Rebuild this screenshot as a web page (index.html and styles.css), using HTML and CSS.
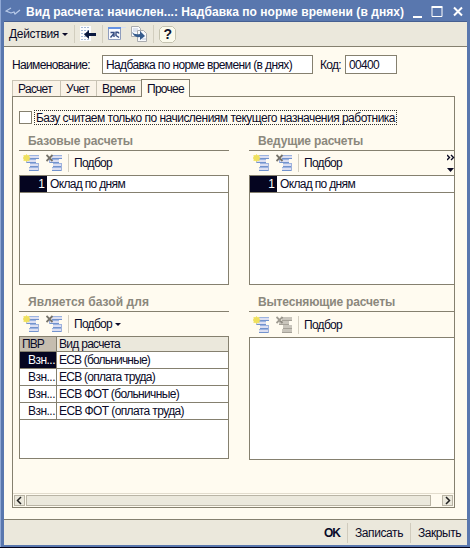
FILE: index.html
```html
<!DOCTYPE html>
<html lang="ru">
<head>
<meta charset="utf-8">
<title>Вид расчета</title>
<link rel="stylesheet" href="styles.css">
</head>
<body>
<svg class="defs" width="0" height="0">
  <defs>
    <g id="rows">
      <path d="M6 1h10v4H6zM3 5h10v4H3zM7 9h9v4H7zM6 13h10v4H6z" fill="#dcdff2"/>
      <path d="M6 1.500h10M3 5.500h10M7 9.500h9M6 13.500h10" stroke="#9db4e0"/>
      <path d="M6 4.500h10M3 8.500h10M7 12.500h9M6 16.500h10" stroke="#7393cd"/>
      <path d="M3.500 5v4M15.500 9v8" stroke="#a0b2dc"/>
    </g>
    <g id="rowsOff">
      <path d="M6 1h10v4H6zM3 5h10v4H3zM7 9h9v4H7zM6 13h10v4H6z" fill="#c9c5bc"/>
      <path d="M6 4.500h10M3 8.500h10M7 12.500h9M6 16.500h10" stroke="#a5a198"/>
    </g>
    <path id="star" d="M3.500 0l1 1.200 2-.2-.2 2L7.500 4 6.300 5l.2 2-2-.2-1 1.200-1-1.200-2 .2.2-2L-.5 4l1.200-1L.5 1l2 .2z" fill="#efe05c"/>
    <path id="cross" d="M.5 1l6 6M6.500 1l-6 6" stroke="#77736a" stroke-width="1.800"/>
  </defs>
</svg>
<div class="window">
  <header class="title">
    <svg class="logo" width="16" height="10"><path d="M6 1L1 4l5 2M6 6l3-1 1 2 5-4" fill="none" stroke="#b9cbe9" stroke-width="1.200"/></svg>
    <b data-w="378">Вид расчета: начислен...: Надбавка по норме времени (в днях)</b>
    <svg class="controls" width="52" height="14"><path d="M1 12h9" stroke="#fff" stroke-width="2"/><path d="M20 2.500h10v9H20z" fill="none" stroke="#fff"/><path d="M19.500 2h11" stroke="#fff" stroke-width="2"/><path d="M42 2.500l8 8M50 2.500l-8 8" stroke="#fff" stroke-width="2"/></svg>
  </header>
  <div class="toolbar">
    <span data-w="50">Действия</span><i class="caret"></i><i class="sep s1"></i>
    <svg class="t1" width="18" height="18"><path d="M0 1h11v15H0z" fill="#fcfdff"/><path d="M1 2.500h9M1 5.500h9M1 8.500h9M1 11.500h9M1 14.500h9" stroke="#a9bcd8" stroke-dasharray="2 1"/><path d="M4 9.500l5-4.500v3h7v3H9v3z" fill="#09183f"/></svg><i class="sep s2"></i>
    <svg class="t2" width="20" height="18"><path d="M1.500 3.500h12v11h-12z" fill="#f8f9ff" stroke="#8f9dbd"/><path d="M1 3h13" stroke="#6693e3" stroke-width="2"/><path d="M14 2.500h5" stroke="#d5e0f5"/><path d="M3.500 7.500h3.500v4.500M7 8.500L3.500 12.500M9 6.500v4l3 2M9 7.500q2-1 3 1" fill="none" stroke="#354c82" stroke-width="1.400"/></svg>
    <svg class="t3" width="18" height="18"><path d="M1.500 1.500h7l2 2v8h-9zM7.500 5.500h6l3 3v8h-9z" fill="#f8f9fc" stroke="#a9abae"/><path d="M3 4h5M3 6h4M12 14h4" stroke="#bec9df"/><path d="M2 7q2 3 8 2V6l5 5-5 4v-3Q4 13 2 7z" fill="#355b8d"/></svg><i class="sep s3"></i>
    <svg class="t4" width="17" height="17"><path d="M3.500.5h10l3 3v10l-3 3h-10l-3-3v-10z" fill="#fbfaec" stroke="#c5c3b0"/><text x="4.500" y="13" class="help">?</text></svg>
  </div>
  <main>
    <div class="fields">
      <label data-w="78">Наименование:</label>
      <div class="input name"><span data-w="186">Надбавка по норме времени (в днях)</span></div>
      <label class="code-label" data-w="21">Код:</label>
      <div class="input code"><span data-w="30">00400</span></div>
    </div>
    <nav class="tabs">
      <div class="tab a"><span data-w="34">Расчет</span></div><div class="tab b"><span data-w="23">Учет</span></div><div class="tab c"><span data-w="33">Время</span></div><div class="tab active"><span data-w="37">Прочее</span></div>
    </nav>
    <section class="panel">
      <div class="check"><i class="box"></i><div class="focus"><span data-w="359">Базу считаем только по начислениям текущего назначения работника</span></div></div>
      <div class="groups">
        <div class="group">
          <h2><span data-w="105">Базовые расчеты</span></h2>
          <div class="commands"><svg width="18" height="18"><use href="#rows"/><use href="#star"/></svg><svg width="18" height="18"><use href="#rows"/><use href="#cross"/></svg><i></i><span data-w="38">Подбор</span></div>
          <div class="table"><div class="row single"><div class="num">1</div><span data-w="75">Оклад по дням</span></div></div>
        </div>
        <div class="group right">
          <h2><span data-w="105">Ведущие расчеты</span></h2>
          <div class="commands"><svg width="18" height="18"><use href="#rows"/><use href="#star"/></svg><svg width="18" height="18"><use href="#rows"/><use href="#cross"/></svg><i></i><span data-w="38">Подбор</span>
            <svg class="more" width="8" height="20"><path d="M0 2l2.500 2.500L0 7M4 2l2.500 2.500L4 7" fill="none" stroke="#080822" stroke-width="1.400"/><path d="M0 15h7l-3.500 4z" fill="#080822"/></svg></div>
          <div class="table"><div class="row single"><div class="num">1</div><span data-w="75">Оклад по дням</span></div></div>
        </div>
        <div class="group base">
          <h2><span data-w="121">Является базой для</span></h2>
          <div class="commands"><svg width="18" height="18"><use href="#rows"/><use href="#star"/></svg><svg width="18" height="18"><use href="#rows"/><use href="#cross"/></svg><i></i><span data-w="38">Подбор</span><b class="caret"></b></div>
          <div class="table">
            <div class="row head"><div><span data-w="22">ПВР</span></div><span data-w="61">Вид расчета</span></div>
            <div class="row selected"><div><span data-w="27">Взн...</span></div><span data-w="91">ЕСВ (больничные)</span></div>
            <div class="row"><div><span data-w="27">Взн...</span></div><span data-w="96">ЕСВ (оплата труда)</span></div>
            <div class="row"><div><span data-w="27">Взн...</span></div><span data-w="120">ЕСВ ФОТ (больничные)</span></div>
            <div class="row"><div><span data-w="27">Взн...</span></div><span data-w="125">ЕСВ ФОТ (оплата труда)</span></div>
          </div>
        </div>
        <div class="group right displaced">
          <h2><span data-w="137">Вытесняющие расчеты</span></h2>
          <div class="commands"><svg width="18" height="18"><use href="#rows"/><use href="#star"/></svg><svg width="18" height="18"><use href="#rowsOff"/><use href="#cross" opacity=".7"/></svg><i></i><span data-w="38">Подбор</span></div>
          <div class="table"></div>
        </div>
      </div>
      <div class="scroll"><div class="btn"><svg width="9" height="9"><path d="M6 1L2.500 4.500 6 8" fill="none" stroke="#222" stroke-width="1.500"/></svg></div><div class="thumb"></div><div class="btn"><svg width="9" height="9"><path d="M3 1l3.500 3.500L3 8" fill="none" stroke="#222" stroke-width="1.500"/></svg></div></div>
    </section>
  </main>
  <footer><b data-w="16">OK</b><i></i><span data-w="48">Записать</span><i></i><span data-w="43">Закрыть</span></footer>
</div>
<script src="fit.js"></script>
</body>
</html>
```
FILE: styles.css
```css
* { box-sizing: border-box; }
body { margin: 0; background: #000018; color: #0a0a28; font: 12px/14px "Liberation Sans", sans-serif; overflow: hidden; }
.defs { position: absolute; }
svg { display: block; flex: none; }
[data-w] { white-space: nowrap; flex: none; display: inline-block; }
.window { width: 470px; height: 547px; padding: 0 3px 3px 3px; background: #5977ae; border-left: 1px solid #90a8d5; display: flex; flex-direction: column; }
.title { height: 22px; flex: none; display: flex; align-items: center; color: #fff; padding-top: 3px; border-bottom: 1px solid #465f91; }
.title b { font-size: 12px; margin-left: 5px; }
.logo { margin-left: 1px; }
.controls { margin-left: 8px; }
.toolbar { height: 25px; flex: none; background: #ebe8dc; border-bottom: 1px solid #85806f; display: flex; align-items: center; padding-left: 5px; }
.caret { width: 0; height: 0; border: 3px solid transparent; border-top: 3px solid #0a0a28; border-bottom: 0; margin-left: 3px; }
.sep { height: 18px; border-left: 1px solid #d2cebf; }
.s1 { margin-left: 6px; } .s2 { margin-left: 4px; } .s3 { margin-left: 5px; }
.t1 { margin-left: 5px; } .t2 { margin-left: 4px; } .t3 { margin-left: 3px; } .t4 { margin-left: 5px; }
.help { font: bold 14px "Liberation Sans", sans-serif; fill: #10132c; }
main { height: 472px; flex: none; background: #fffbf0; padding: 8px 12px 0 8px; }
.fields { height: 19px; display: flex; align-items: center; }
.input { height: 19px; border: 1px solid #85806f; background: #fff; padding: 2px 0 0 3px; display: flex; }
.name { width: 211px; margin-left: 12px; }
.code-label { margin-left: 7px; }
.code { width: 52px; margin-left: 4px; }
.tabs { height: 22px; display: flex; align-items: flex-end; }
.tab { height: 16px; border: 1px solid #c9c3b4; border-bottom: 0; border-right: 0; padding: 1px 0 0 5px; background: #faf3e7; display: flex; align-items: center; }
.a { width: 48px; } .b { width: 36px; } .c { width: 45px; }
.tab.active { width: 49px; height: 18px; border: 1px solid #85806f; border-bottom: 0; background: #fffbf0; margin-bottom: -1px; padding-top: 0; z-index: 1; }
.panel { width: 443px; height: 412px; border: 1px solid #85806f; padding-top: 13px; }
.check { height: 15px; display: flex; margin-left: 6px; align-items: center; }
.box { width: 13px; height: 13px; border: 1px solid #85806f; background: #fff; }
.focus { margin-left: 2px; width: 363px; height: 15px; border: 1px dotted #333; padding-left: 1px; display: flex; align-items: center; }
.groups { height: 368px; padding: 7px 0 0 6px; display: grid; grid-template: 161px 167px / 210px 205px; column-gap: 20px; }
.group { display: flex; flex-direction: column; }
h2 { margin: 0; height: 19px; flex: none; border-bottom: 1px solid #85806f; color: #8b887d; font: bold 12px/15px "Liberation Sans", sans-serif; padding-left: 9px; display: flex; align-items: center; }
.commands { height: 24px; flex: none; display: flex; align-items: center; padding-left: 4px; position: relative; }
.commands svg + svg { margin-left: 5px; }
.commands i { height: 18px; border-left: 1px solid #d4cfc1; margin: 0 5px 0 4px; }
.commands .more { position: absolute; right: -1px; top: 2px; margin: 0; }
.table { height: 110px; border: 1px solid #85806f; background: #fff; }
.right .table { border-right: 0; }
.row { height: 17px; border-bottom: 1px solid #85806f; display: grid; grid-template-columns: 37px 1fr; align-items: center; }
.row > div { height: 16px; border-right: 1px solid #85806f; padding: 1px 0 0 8px; overflow: hidden; }
.row > span { margin-left: 2px; justify-self: start; }
.row.single { grid-template-columns: 27px 1fr; }
.row .num { background: #050520; color: #fff; text-align: right; padding: 1px 2px 0 0; border: 0; }
.row.single > span { margin-left: 3px; }
.row.head { height: 15px; background: #ebe8dc; }
.row.head > div { height: 14px; background: #c5bdaf; padding: 0 0 0 2px; }
.selected > div { background: #050520; color: #fff; }
.base .table, .displaced .table { height: 123px; }
.displaced .commands { height: 25px; }
.scroll { height: 14px; border-top: 1px solid #e2dccd; padding: 1px; display: flex; }
.btn { width: 11px; height: 11px; border: 1px solid #b9b4a5; background: #ebe8dc; }
.thumb { width: 405px; height: 11px; border: 1px solid #b9b4a5; background: #ebe8dc; margin: 0 11px 0 1px; }
footer { height: 26px; flex: none; background: #ebe8dc; border-top: 1px solid #85806f; display: flex; align-items: center; justify-content: flex-end; padding-right: 6px; }
footer i { height: 20px; border-left: 1px solid #d0cbbd; margin: 0 7px; }
```
FILE: fit.js
```js
// Spread each label's letters so that it fills its nominal width.
document.querySelectorAll('[data-w]').forEach(function (el) {
  var width = Number(el.dataset.w);
  var natural = el.getBoundingClientRect().width;
  el.style.letterSpacing = (width - natural) / el.textContent.length + 'px';
});
```
